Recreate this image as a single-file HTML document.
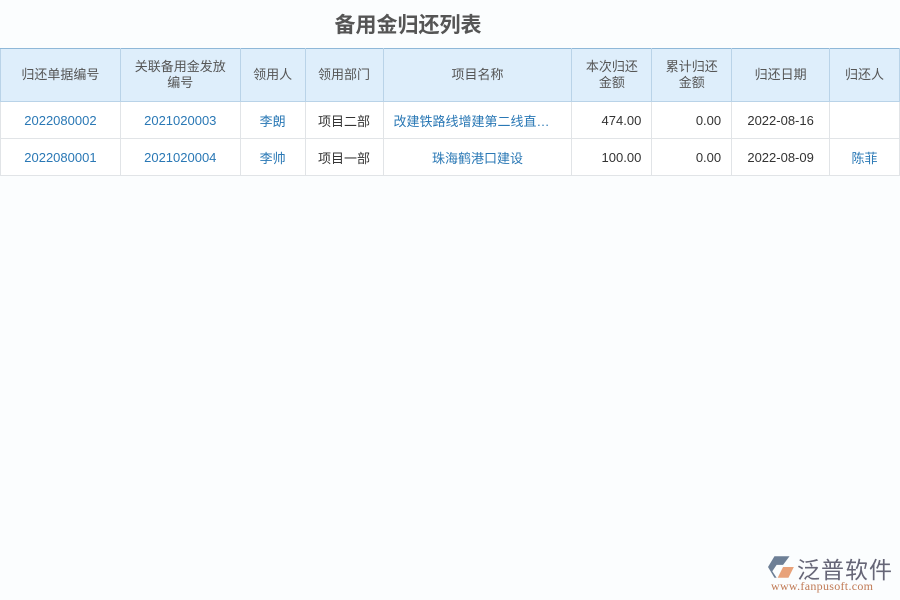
<!DOCTYPE html><html><head><meta charset="utf-8"><style>
body{margin:0;width:900px;height:600px;background:#fbfdfe;font-family:"Liberation Sans","Noto Sans CJK SC",sans-serif;position:relative;overflow:hidden}
h1{position:absolute;left:0;width:816px;top:9px;margin:0;text-align:center;font-size:21px;font-weight:bold;color:#555}
table{position:absolute;top:48px;left:0;border-collapse:collapse;table-layout:fixed;font-size:13px}
th{background:#deeefb;color:#555;font-weight:normal;height:52px;border:1px solid #b9d3e8;border-top:1px solid #8fb8d8;line-height:16px;padding:0 2px}
td{height:36px;border:1px solid #e1e4e7;text-align:center;color:#333;background:#fff;padding:0 6px;white-space:nowrap;overflow:hidden;text-overflow:ellipsis}
td.b{color:#2a78b5}td.r{text-align:right;padding-right:10px}
.logo{position:absolute;left:768px;top:553px}
</style></head><body>
<h1>备用金归还列表</h1>
<table>
<colgroup><col width="120"><col width="120"><col width="65"><col width="78"><col width="189"><col width="80"><col width="80"><col width="98"><col width="70"></colgroup>
<tr><th>归还单据编号</th><th>关联备用金发放<br>编号</th><th>领用人</th><th>领用部门</th><th>项目名称</th><th>本次归还<br>金额</th><th>累计归还<br>金额</th><th>归还日期</th><th>归还人</th></tr>
<tr><td class="b">2022080002</td><td class="b">2021020003</td><td class="b">李朗</td><td>项目二部</td><td class="b" style="text-align:left;padding-left:10px">改建铁路线增建第二线直…</td><td class="r">474.00</td><td class="r">0.00</td><td>2022-08-16</td><td></td></tr>
<tr><td class="b">2022080001</td><td class="b">2021020004</td><td class="b">李帅</td><td>项目一部</td><td class="b">珠海鹤港口建设</td><td class="r">100.00</td><td class="r">0.00</td><td>2022-08-09</td><td class="b">陈菲</td></tr>
</table>
<div class="logo">
<svg width="28" height="26" style="position:absolute;left:0;top:1px" viewBox="0 0 26 24"><path d="M6 2h14l-6 8H8L4 16l4 6H6L0 12z" fill="#6d7f96"/><path d="M14 12h10l-5 10H9z" fill="#e8a27a"/></svg>
<div style="position:absolute;left:29px;top:-2px;font-size:23px;color:#667;white-space:nowrap;letter-spacing:1px">泛普软件</div>
<div style="position:absolute;left:3px;top:26px;font-size:12px;color:#c07a55;font-family:'Liberation Serif',serif;white-space:nowrap;letter-spacing:0.3px">www.fanpusoft.com</div>
</div>
</body></html>
